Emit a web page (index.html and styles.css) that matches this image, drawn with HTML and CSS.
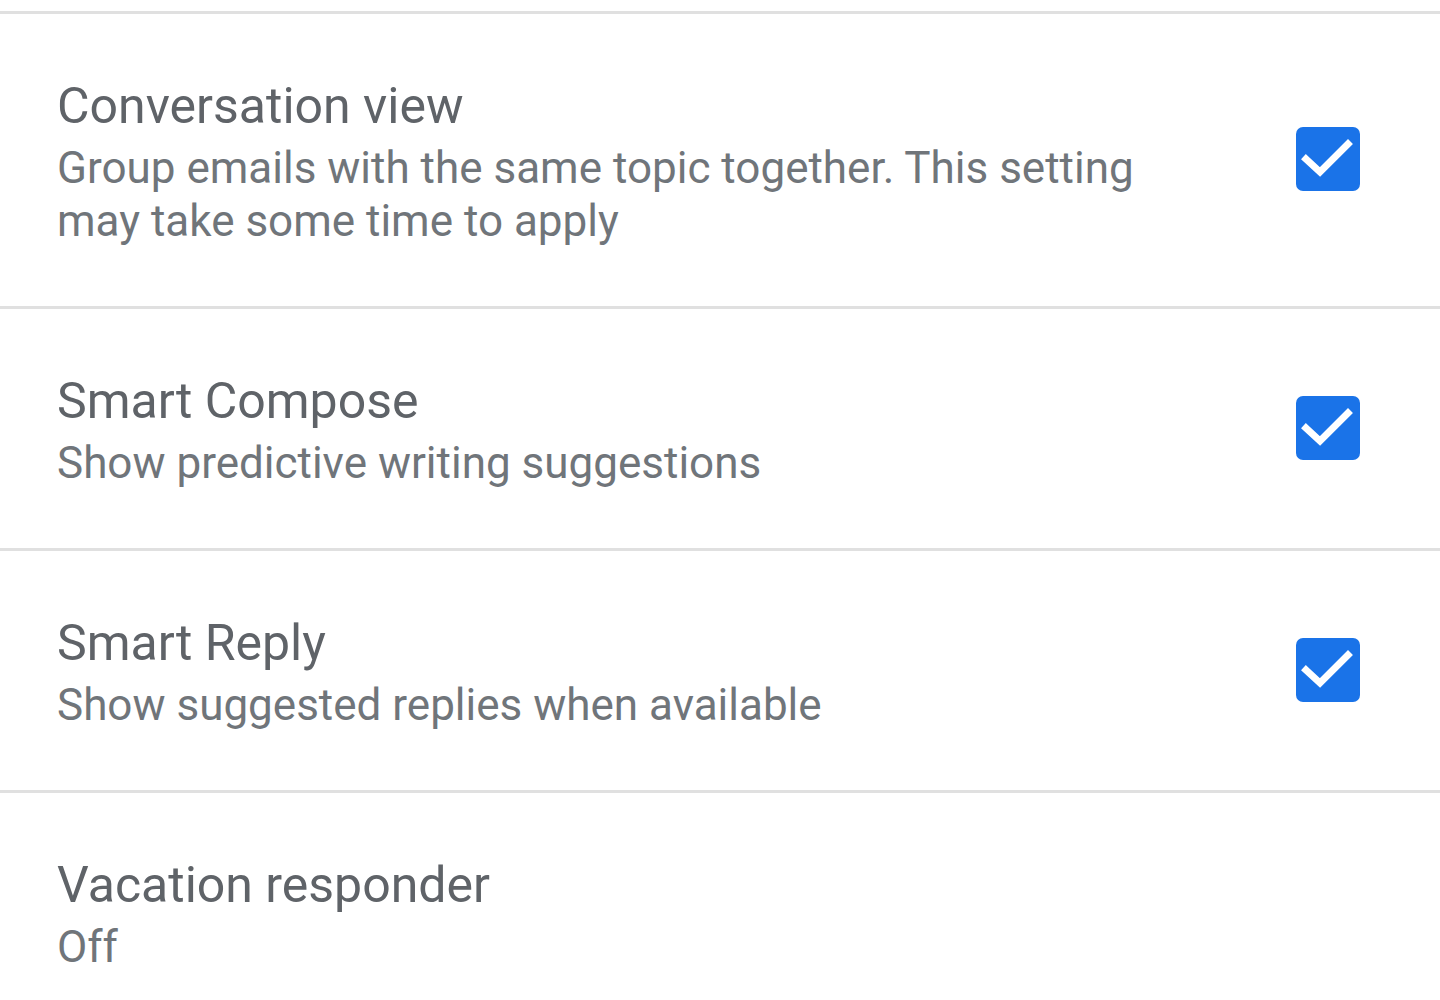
FILE: index.html
```html
<!DOCTYPE html>
<html lang="en">
<head>
<meta charset="utf-8">
<title>Settings</title>
<link rel="stylesheet" href="styles.css">
</head>
<body>
<div class="top-space"></div>
<ul class="settings">
  <li class="row">
    <div class="text">
      <div class="title">Conversation view</div>
      <div class="summary">Group emails with the same topic together. This setting may take some time to apply</div>
    </div>
    <span class="checkbox"><svg viewBox="0 0 64 64" width="64" height="64"><path d="M10 32 L24 45 L52 17" fill="none" stroke="#fff" stroke-width="7" stroke-linecap="square"/></svg></span>
  </li>
  <li class="row">
    <div class="text">
      <div class="title">Smart Compose</div>
      <div class="summary">Show predictive writing suggestions</div>
    </div>
    <span class="checkbox"><svg viewBox="0 0 64 64" width="64" height="64"><path d="M10 32 L24 45 L52 17" fill="none" stroke="#fff" stroke-width="7" stroke-linecap="square"/></svg></span>
  </li>
  <li class="row">
    <div class="text">
      <div class="title">Smart Reply</div>
      <div class="summary">Show suggested replies when available</div>
    </div>
    <span class="checkbox"><svg viewBox="0 0 64 64" width="64" height="64"><path d="M10 32 L24 45 L52 17" fill="none" stroke="#fff" stroke-width="7" stroke-linecap="square"/></svg></span>
  </li>
  <li class="row">
    <div class="text">
      <div class="title">Vacation responder</div>
      <div class="summary">Off</div>
    </div>
  </li>
</ul>
</body>
</html>
```
FILE: styles.css
```css
html, body {
  margin: 0;
  padding: 0;
  background: #ffffff;
  font-family: Roboto, "Noto Sans", sans-serif;
}
.top-space {
  height: 11px;
}
.settings {
  list-style: none;
  margin: 0;
  padding: 0;
}
.row {
  display: flex;
  align-items: center;
  border-top: 3px solid #e0e0e0;
  padding: 62px 80px 58px 57px;
}
.text {
  flex: 1;
  padding-right: 116px;
}
.title {
  font-size: 50px;
  line-height: 60px;
  color: #5f6368;
}
.summary {
  margin-top: 6px;
  font-size: 44px;
  line-height: 53px;
  color: #70757a;
}
.checkbox {
  flex: none;
  width: 64px;
  height: 64px;
  margin-bottom: 6px;
  border-radius: 7px;
  background: #1a73e8;
  display: flex;
}
```
